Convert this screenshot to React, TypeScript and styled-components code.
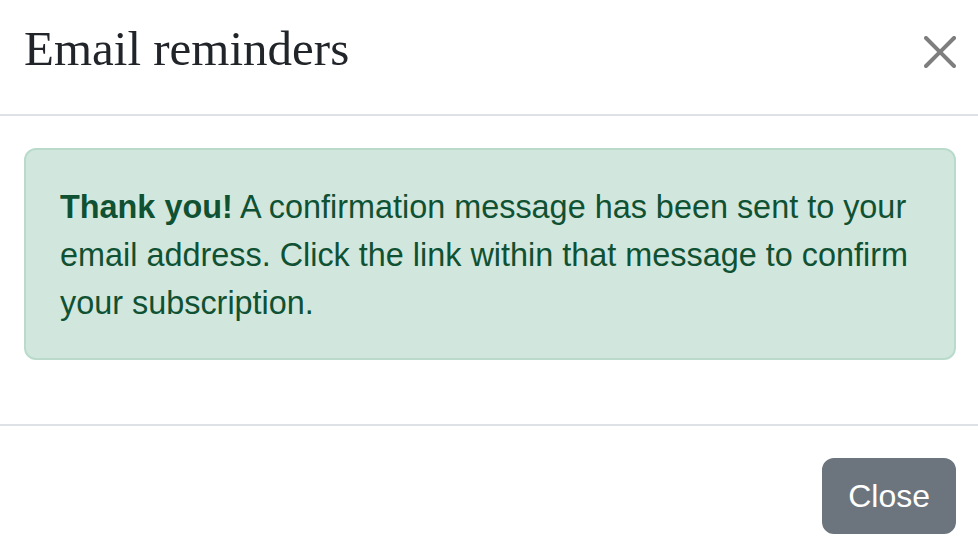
import { styled, createGlobalStyle } from 'styled-components'

const GlobalStyle = createGlobalStyle`
  html, body {
    margin: 0;
    padding: 0;
    background: #fff;
    overflow: hidden;
  }
  * {
    box-sizing: border-box;
  }
  body {
    font-family: "Liberation Sans", Arial, Helvetica, sans-serif;
    color: #212529;
  }
`

const Modal = styled.div`
  width: 978px;
  background: #fff;
`

const Header = styled.header`
  display: flex;
  align-items: flex-start;
  justify-content: space-between;
  padding: 19px 22px 35px 24px;
  border-bottom: 2px solid #dee2e6;
`

const Title = styled.h5`
  margin: 0;
  font-family: "Liberation Serif", "Times New Roman", serif;
  font-weight: 400;
  font-size: 49px;
  line-height: 60px;
  color: #212529;
`

const CloseIcon = styled.button`
  display: block;
  width: 32px;
  height: 32px;
  margin-top: 17px;
  padding: 0;
  border: 0;
  background: transparent;
  opacity: 0.5;
  cursor: pointer;
  svg {
    display: block;
  }
`

const Body = styled.div`
  padding: 32px 22px 32px 24px;
`

const Alert = styled.div`
  margin-bottom: 32px;
  padding: 33px 32px 31px 34px;
  border: 2px solid #badbcc;
  border-radius: 12px;
  background: #d1e7dd;
  color: #0f5132;
  font-size: 32.4px;
  line-height: 48px;
  strong {
    font-weight: 700;
  }
`

const Footer = styled.footer`
  display: flex;
  justify-content: flex-end;
  padding: 32px 22px 16px 24px;
  border-top: 2px solid #dee2e6;
`

const Button = styled.button`
  padding: 12px 24px;
  border: 2px solid #6c757d;
  border-radius: 12px;
  background: #6c757d;
  color: #fff;
  font-family: "Liberation Sans", Arial, Helvetica, sans-serif;
  font-size: 32px;
  line-height: 48px;
  cursor: pointer;
`

export default function App() {
  return (
    <Modal>
      <GlobalStyle />
      <Header>
        <Title>Email reminders</Title>
        <CloseIcon aria-label="Close">
          <svg width="32" height="32" viewBox="0 0 16 16" fill="#000">
            <path d="M.293.293a1 1 0 0 1 1.414 0L8 6.586 14.293.293a1 1 0 1 1 1.414 1.414L9.414 8l6.293 6.293a1 1 0 0 1-1.414 1.414L8 9.414l-6.293 6.293a1 1 0 0 1-1.414-1.414L6.586 8 .293 1.707a1 1 0 0 1 0-1.414z" />
          </svg>
        </CloseIcon>
      </Header>
      <Body>
        <Alert>
          <strong>Thank you!</strong> A confirmation message has been sent to your
          email address. Click the link within that message to confirm your
          subscription.
        </Alert>
      </Body>
      <Footer>
        <Button>Close</Button>
      </Footer>
    </Modal>
  )
}
